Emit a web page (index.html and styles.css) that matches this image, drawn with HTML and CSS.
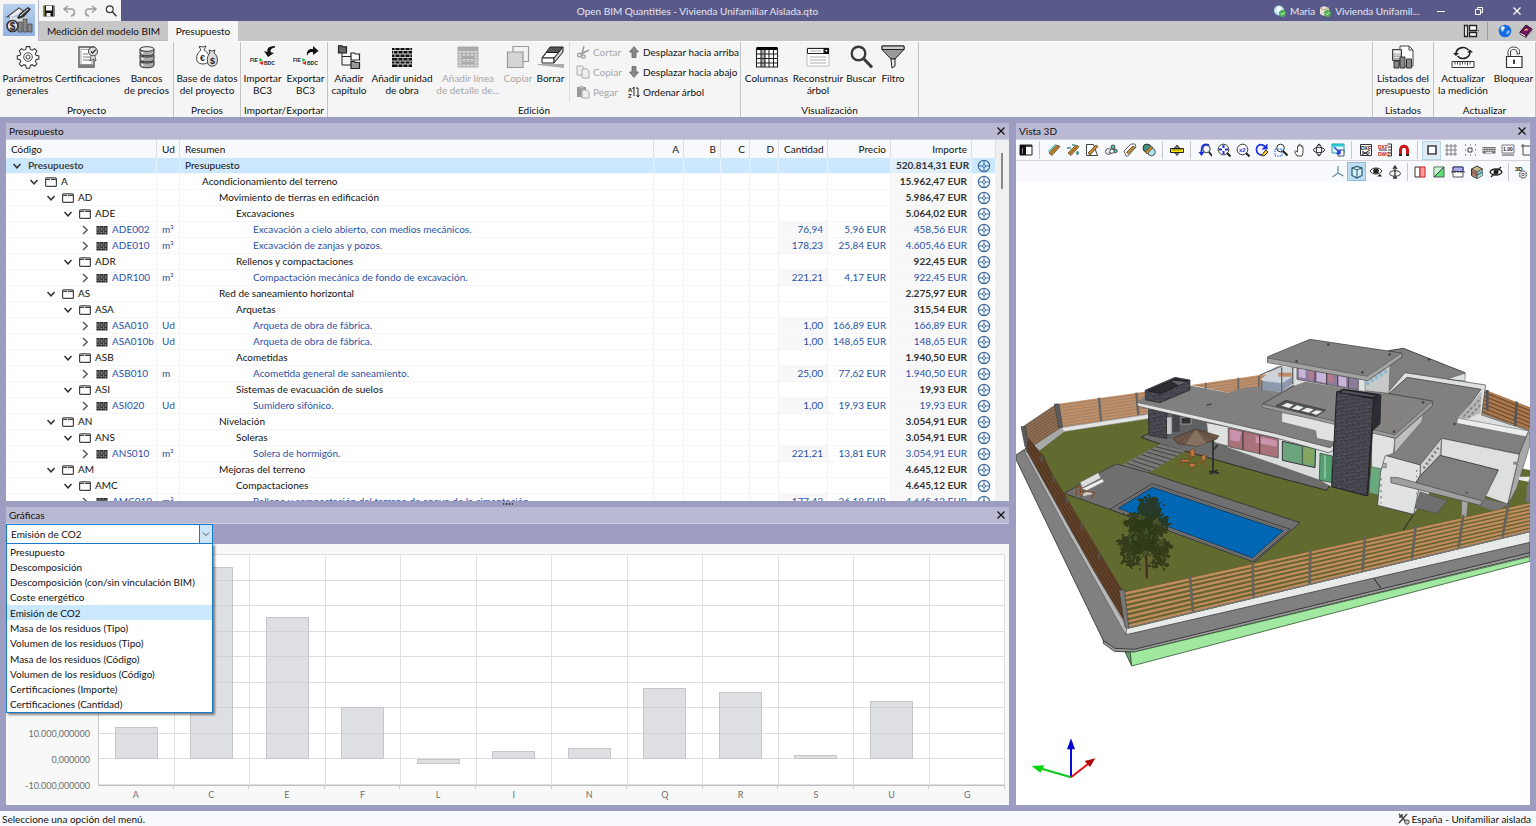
FILE: index.html
```html
<!DOCTYPE html>
<html lang="es">
<head>
<meta charset="utf-8">
<title>Open BIM Quantities - Vivienda Unifamiliar Aislada.qto</title>
<link rel="stylesheet" href="styles.css">
</head>
<body>
<svg class="defs" aria-hidden="true">
  <symbol id="i-open" viewBox="0 0 10 10"><path d="M1.500 3 5 6.800 8.500 3" fill="none" stroke="#333" stroke-width="1.500"/></symbol>
  <symbol id="i-closed" viewBox="0 0 10 10"><path d="M3 1 7.200 5 3 9" fill="none" stroke="#555" stroke-width="1.400"/></symbol>
  <symbol id="i-folder" viewBox="0 0 12 10"><rect x=".6" y=".8" width="10.800" height="8.600" rx="1" fill="#fff" stroke="#444" stroke-width="1.200"/><path d="M1 2.500h4M6 2.500h5" stroke="#444" stroke-width="1.200"/></symbol>
  <symbol id="i-wall" viewBox="0 0 12 10"><rect x=".5" y="1" width="11" height="8.500" fill="#2b2b2b"/><path d="M.5 3.100h11M.5 5.200h11M.5 7.300h11M3.500 1v2M7.500 1v2M5.500 3v2M9.500 3v2M1.800 3v2M3.500 5.500v2M7.500 5.500v2M5.500 7.500v2M9.500 7.500v2" stroke="#aaa" stroke-width=".5"/></symbol>
  <symbol id="i-target" viewBox="0 0 14 14"><g fill="none" stroke="#3c6f9f"><circle cx="7" cy="7" r="5.700" stroke-width="1.200"/><circle cx="7" cy="7" r="1.500"/><path d="M7 1v4M7 9v4M1 7h4M9 7h4"/></g></symbol>
  <symbol id="i-x" viewBox="0 0 10 10"><path d="M1.500 1.500l7 7M8.500 1.500l-7 7" stroke="currentColor" stroke-width="1.300"/></symbol>
  <symbol id="i-lens" viewBox="0 0 24 24"><circle cx="9.500" cy="8.500" r="6.800" fill="none" stroke="#3a3a3a" stroke-width="2.400"/><path d="M14.500 13.500 23 22.500" stroke="#3a3a3a" stroke-width="3"/></symbol>
</svg>

<header class="top">
  <button class="app" aria-label="Menú de la aplicación">
    <svg viewBox="0 0 32 32" width="32" height="32"><path d="M7 13H4L16 4l6 4M9 13v5M23 13v5" fill="#eee" stroke="#555" stroke-width="1.200"/><path d="M7 13h17v11H7z" fill="#d8dde4"/><path d="M14 14l3-5 8-6 3 2-7 8-5 2z" fill="#333"/><path d="M17 12l8-7" stroke="#fff" stroke-width="1"/><path d="M15 18h4v10h-4zM20 15h4v13h-4zM25 20h4v8h-4z" fill="#888" stroke="#444" stroke-width=".8"/><circle cx="9.500" cy="22" r="5.500" fill="#ddd" stroke="#333" stroke-width="1.600"/><text x="9.500" y="25.500" class="t-ic t-10" text-anchor="middle">$</text></svg>
  </button>
  <div class="bars">
    <div class="title">
      <div class="quick">
        <button aria-label="Guardar"><svg viewBox="0 0 12 12" width="12" height="12"><path d="M.5.5h11v11H.5z" fill="#111"/><path d="M3 1h6v4.500H3zM3.500 8h4v3.500h-4z" fill="#f5f5f5"/><path d="M1.500 1v10M10.500 1v10" stroke="#7b7a2a"/></svg></button>
        <button aria-label="Deshacer"><svg viewBox="0 0 13 12" width="13" height="12"><path d="M5 1 1 4l4 3.500M1.500 4H8c5 0 4.500 6 0 7" fill="none" stroke="#999" stroke-width="1.500"/></svg></button>
        <button aria-label="Rehacer"><svg viewBox="0 0 13 12" width="13" height="12"><path d="M8 1l4 3-4 3.500M11.500 4H5c-5 0-4.500 6 0 7" fill="none" stroke="#999" stroke-width="1.500"/></svg></button>
        <button aria-label="Buscar"><svg width="12" height="12"><use href="#i-lens"/></svg></button>
      </div>
      <h1>Open BIM Quantities - Vivienda Unifamiliar Aislada.qto</h1>
      <div class="account">
        <svg viewBox="0 0 12 12" width="12" height="12"><circle cx="5" cy="5.500" r="5" fill="#bfe4ee"/><path d="M4 2c2-1 4 0 3 3l-3 3-2-3z" fill="#fff"/><circle cx="8.500" cy="8.500" r="3.400" fill="#4caf50"/><path d="M7 8.500l1.200 1.200 2-2.200" fill="none" stroke="#fff"/></svg><span>Maria</span>
        <svg viewBox="0 0 12 12" width="12" height="12"><path d="M1 3l4-2 5 2v6l-5 2-4-2z" fill="#e8ddd0"/><path d="M1 3l4 2 5-2" fill="none" stroke="#b9a68c"/><circle cx="8.500" cy="8.500" r="3.400" fill="#4caf50"/><path d="M7 8.500l1.200 1.200 2-2.200" fill="none" stroke="#fff"/></svg><span>Vivienda Unifamil...</span>
      </div>
      <div class="win">
        <button aria-label="Minimizar"><svg viewBox="0 0 10 10" width="10" height="10"><path d="M1 5.500h8" stroke="#fff"/></svg></button>
        <button aria-label="Restaurar"><svg viewBox="0 0 10 10" width="10" height="10"><path d="M1.500 3.500h5v5h-5zM3.500 3V1.500h5v5H7" fill="none" stroke="#fff"/></svg></button>
        <button aria-label="Cerrar"><svg width="10" height="10"><use href="#i-x"/></svg></button>
      </div>
    </div>
    <nav class="tabs">
      <button class="tab">Medición del modelo BIM</button>
      <button class="tab on">Presupuesto</button>
      <span class="grow"></span>
      <button aria-label="Disposición" class="mini"><svg viewBox="0 0 16 14" width="16" height="14"><path d="M1.500 1.500h3v11h-3zM6.500 1.500h7v5h-7zM6.500 8.500h7v4h-7z" fill="#fff" stroke="#222" stroke-width="1.300"/><path d="M15 6.500h1" stroke="#222"/></svg></button>
      <span class="vsep"></span>
      <button aria-label="Web" class="mini"><svg viewBox="0 0 14 14" width="14" height="14"><circle cx="7" cy="7" r="6.300" fill="#1769e0"/><path d="M2.500 5c1-3 4-3 4.500-1.500L6 6 5 8 3 7zM8 8l3-2 1 2-3 3z" fill="#7db8f5"/><circle cx="4.800" cy="4" r="1.700" fill="#fff"/></svg></button>
      <button aria-label="Ayuda" class="mini"><svg viewBox="0 0 14 14" width="14" height="14"><path d="M1 8 7 1l6 4-6 7z" fill="#73125f" stroke="#300428"/><path d="M1 8v2l6 3.500v-2zM7 13l6-7V5" fill="#fff" stroke="#300428" stroke-width=".8"/><path d="M6 7c0-2 3-2 2-.5" fill="none" stroke="#ffd23c" stroke-width="1.200"/></svg></button>
    </nav>
  </div>
</header>

<div class="ribbon">
  <section class="group">
    <div class="tools">
      <button class="tool w55"><svg viewBox="0 0 24 24" width="24" height="24"><path d="M10.200 1.500h3.600l.6 3 2 .9 2.600-1.700 2.400 2.500-1.700 2.600.8 2 3 .6v3.400l-3 .6-.8 2 1.700 2.500-2.400 2.500-2.600-1.700-2 .8-.6 3h-3.600l-.6-3-2-.8L5 22.400l-2.400-2.500 1.700-2.500-.8-2-3-.6v-3.400l3-.6.8-2-1.700-2.600L5 3.700l2.600 1.700 2-.9z" fill="#fff" stroke="#333" stroke-width="1.100" transform="translate(.8 .2) scale(.94)"/><circle cx="12" cy="12" r="4.300" fill="none" stroke="#444"/><circle cx="12" cy="12" r="2" fill="none" stroke="#444"/></svg>Parámetros<br>generales</button>
      <button class="tool w65"><svg viewBox="0 0 24 24" width="24" height="24"><path d="M3 2h15v20H3z" fill="#eee" stroke="#555" stroke-width="1.400"/><path d="M5 4.500h11v15H5z" fill="#fff" stroke="#999" stroke-width=".8"/><path d="M7 9h5M7 12h7M7 15h7M3 20h15v2H3z" stroke="#777" fill="#888"/><circle cx="17" cy="6.500" r="4.500" fill="#ddd" stroke="#333"/><path d="M15 6.500l1.600 1.700 3-3.500" fill="none" stroke="#222" stroke-width="1.200"/><path d="M15 11l-1 5 3-2 3 2-1-5" fill="#ddd" stroke="#444" stroke-width=".8"/></svg>Certificaciones</button>
      <button class="tool w53"><svg viewBox="0 0 24 24" width="24" height="24"><g fill="#aaa" stroke="#333"><path d="M5 16v4.500c0 3 14 3 14 0V16"/><ellipse cx="12" cy="16" rx="7" ry="2"/><path d="M5 10v4.500c0 3 14 3 14 0V10"/><ellipse cx="12" cy="10" rx="7" ry="2"/><path d="M5 4v4.500c0 3 14 3 14 0V4"/><ellipse cx="12" cy="4" rx="7" ry="2.300" fill="#eee"/></g><path d="M7.500 7v2M7.500 13v2M7.500 19v2" stroke="#fff" stroke-width="1.500"/></svg>Bancos<br>de precios</button>
    </div>
    <h2>Proyecto</h2>
  </section>
  <section class="group">
    <div class="tools">
      <button class="tool w67"><svg viewBox="0 0 24 24" width="24" height="24"><path d="M6 5 4 1.500 8 2l3-1-2 4c4 2 6 6 5 11-2 4-10 4-12 0-1-4 0-8 4-11z" fill="#fff" stroke="#444"/><path d="M15 8l-1-3 3 1 3-1-1 3c3 2 4 6 3 10-1 4-8 4-9 1-1-4-1-8 2-11z" fill="#ddd" stroke="#444"/><text x="7.500" y="15.500" class="t-ic t-9" text-anchor="middle">€</text><text x="17.500" y="19" class="t-ic t-9" text-anchor="middle">$</text></svg>Base de datos<br>del proyecto</button>
    </div>
    <h2>Precios</h2>
  </section>
  <section class="group">
    <div class="tools">
      <button class="tool w43"><svg viewBox="0 0 26 24" width="26" height="24"><path d="M25 1C17 1 17 5 17.500 7L14 6l4 6 6-4-3-.800C20 5 21 3 25 2.500z" fill="#111"/><text x="0" y="17" class="t-ic t-5">FIE</text><text x="14" y="20" class="t-ic t-5">BDC</text><path d="M9.500 13l3 2-3 2z" fill="#0b3"/><path d="M13 16v4l-4-2z" fill="#e22"/></svg>Importar<br>BC3</button>
      <button class="tool w43"><svg viewBox="0 0 26 24" width="26" height="24"><path d="M14 11C13 5 17 3.500 20 4V1l5.500 5L20 10V7c-3-.5-5 1-6 4z" fill="#111"/><text x="0" y="17" class="t-ic t-5">FIE</text><text x="14" y="20" class="t-ic t-5">BDC</text><path d="M9.500 13l3 2-3 2z" fill="#0b3"/><path d="M13 16v4l-4-2z" fill="#e22"/></svg>Exportar<br>BC3</button>
    </div>
    <h2>Importar/Exportar</h2>
  </section>
  <section class="group">
    <div class="tools">
      <button class="tool w42"><svg viewBox="0 0 24 24" width="24" height="24"><path d="M5 8v12h9M5 11.500h9" fill="none" stroke="#222"/><g stroke="#222" stroke-width="1.200"><path d="M1.500.800h3.500l1 1h3.500v6h-8z" fill="#666"/><path d="M14 8h3.500l1 1H22.500v6H14z" fill="#fff"/><path d="M14 16.500h3.500l1 1H22.500v6H14z" fill="#999"/></g></svg>Añadir<br>capítulo</button>
      <button class="tool w64"><svg viewBox="0 0 24 24" width="24" height="24"><path d="M2 3h20v19H2z" fill="#111"/><path d="M2 5.500h20M2 9h20M2 12.500h20M2 16h20M2 19h20M5 3v2.500M10 3v2.500M15 3v2.500M20 3v2.500M3.500 6v3M8 6v3M13 6v3M18 6v3M5 9v3M10 9v3M15 9v3M20 9v3M8 12.500v3M13 12.500v3M18 12.500v3M5 16v3M10 16v3M15 16v3M20 16v3M8 19v3M13 19v3M18 19v3" stroke="#eee" stroke-width=".8"/></svg>Añadir unidad<br>de obra</button>
      <button class="tool w68" disabled><svg viewBox="0 0 24 24" width="24" height="24"><path d="M2 2h20v4H2z" fill="#aaa"/><path d="M2 6h20v16H2z" fill="#d8d8d8"/><path d="M2 8.500h20M2 11h20M2 13.500h20M2 16h20M2 19h20M6 6v16M10 6v16M14 6v16M18 6v16M2 2h20v20H2z" fill="none" stroke="#a6a6a6" stroke-width=".9"/><path d="M6 11h12v2H6zM6 17h12v2H6z" fill="#aaa"/></svg>Añadir línea<br>de detalle de...</button>
      <button class="tool w32" disabled><svg viewBox="0 0 24 24" width="24" height="24"><path d="M7 1.500h15.500v15H7z" fill="#f3f3f3" stroke="#999" stroke-width="1.200"/><path d="M1.500 7H17v15.500H1.500z" fill="#d5d5d5" stroke="#999" stroke-width="1.200"/></svg>Copiar</button>
      <button class="tool w33"><svg viewBox="0 0 26 24" width="26" height="24"><path d="M0 19h26v4L0 20z" fill="#aaa"/><path d="M12 2h13L16 13H4z" fill="#555" stroke="#222"/><path d="M8.500 7.500H21L16 13H4z" fill="#fff" stroke="#222"/><path d="M4 13h12v5H4z" fill="#fff" stroke="#222"/><path d="M16 13l9-11v5l-9 11z" fill="#ccc" stroke="#222"/></svg>Borrar</button>
      <span class="vsep tall"></span>
      <div class="stack s1">
        <button disabled><svg viewBox="0 0 14 14" width="14" height="14"><path d="M8 1 6 9M13 5 5 9" stroke="#999" stroke-width="1.400"/><circle cx="3.500" cy="10" r="1.900" fill="none" stroke="#999" stroke-width="1.200"/><circle cx="7.500" cy="11.500" r="1.700" fill="none" stroke="#999" stroke-width="1.200"/></svg>Cortar</button>
        <button disabled><svg viewBox="0 0 14 14" width="14" height="14"><path d="M1 1h5l2 2v7H1z" fill="#eee" stroke="#aaa"/><path d="M6 4h5l2 2v7H6z" fill="#eee" stroke="#aaa"/></svg>Copiar</button>
        <button disabled><svg viewBox="0 0 14 14" width="14" height="14"><path d="M1 2h9v10H1z" fill="#999"/><path d="M3.500.800h4v2.500h-4z" fill="#bbb"/><path d="M6 5h5l2 2v6H6z" fill="#eee" stroke="#aaa"/></svg>Pegar</button>
      </div>
      <div class="stack s2">
        <button><svg viewBox="0 0 12 12" width="12" height="12"><path d="M6 .5 10.500 6H8v5.500H4V6H1.500z" fill="#888" stroke="#666" stroke-width=".8"/></svg>Desplazar hacia arriba</button>
        <button><svg viewBox="0 0 12 12" width="12" height="12"><path d="M6 11.500 10.500 6H8V.5H4V6H1.500z" fill="#888" stroke="#666" stroke-width=".8"/></svg>Desplazar hacia abajo</button>
        <button><svg viewBox="0 0 12 12" width="12" height="12"><path d="M6 1v9M6 1 4.500 3M10 2v9M10 11l-1.500-2M10 11l1.500-2M8 2h2" stroke="#222" fill="none"/><text x="0" y="6" class="t-ic t-6">A</text><text x="0" y="12" class="t-ic t-6">Z</text></svg>Ordenar árbol</button>
      </div>
    </div>
    <h2>Edición</h2>
  </section>
  <section class="group vis">
    <div class="tools">
      <button class="tool w51"><svg viewBox="0 0 24 24" width="24" height="24"><path d="M1.500 2h21v20h-21z" fill="#fff"/><path d="M6 5h4v17H6z" fill="#aaa"/><path d="M1.500 2h21v3h-21z" fill="#000"/><path d="M1.500 9h21M1.500 13.500h21M1.500 18h21M6 5v17M10 5v17M14 5v17M18.500 5v17M1.500 3v19h21V3" fill="none" stroke="#222" stroke-width="1.100"/></svg>Columnas</button>
      <button class="tool w52"><svg viewBox="0 0 24 24" width="24" height="24"><path d="M1 3h22v18H1z" fill="#fff" stroke="#bbb"/><path d="M1.500 3.500h21v5h-21z" fill="#fff" stroke="#222"/><path d="M17.500 3h5.500v6h-5.500z" fill="#111"/><path d="M19 5l1.300 2 1.300-2z" fill="#fff"/><path d="M4 6h11M4 12h16M4 15h16M4 18h16" stroke="#aaa"/></svg>Reconstruir<br>árbol</button>
      <button class="tool w34"><svg width="24" height="24"><use href="#i-lens"/></svg>Buscar</button>
      <button class="tool w30"><svg viewBox="0 0 24 24" width="24" height="24"><path d="M1 1h22v3.500L14 14H10L1 4.500z" fill="#999" stroke="#222"/><path d="M1 1h22v3.500H1z" fill="#ccc" stroke="#222"/><path d="M10 14h4v7l-3 2z" fill="#eee" stroke="#222"/></svg>Filtro</button>
    </div>
    <h2>Visualización</h2>
  </section>
  <span class="grow"></span>
  <section class="group first">
    <div class="tools">
      <button class="tool w61"><svg viewBox="0 0 24 24" width="24" height="24"><path d="M9 1h9l4 4v16H9z" fill="#fff" stroke="#444"/><path d="M18 1v4h4" fill="none" stroke="#444"/><path d="M1.500 4.500h9v11h-9z" fill="#aaa" stroke="#444"/><path d="M3 6h6v2H3zM3 10h6M3 12.500h6" fill="#fff" stroke="#eee"/><g fill="#888" stroke="#333"><path d="M3 16h5v7H3zM9 12h5v11H9zM15.500 14h5v9h-5z"/></g></svg>Listados del<br>presupuesto</button>
    </div>
    <h2>Listados</h2>
  </section>
  <section class="group">
    <div class="tools">
      <button class="tool w58"><svg viewBox="0 0 24 24" width="24" height="24"><path d="M5 9a7 6.500 0 0 1 12.500-4M19 7a7 6.500 0 0 1-12.500 4" fill="none" stroke="#222" stroke-width="1.600"/><path d="M2 8h6L5 11zM16 7.500h6L19 4.500z" fill="#222"/><path d="M1 16.500h22v6H1z" fill="#fff" stroke="#333"/><path d="M4 17v2.500M6.500 17v2.500M9 17v3.500M11.500 17v2.500M14 17v2.500M16.500 17v3.500M19 17v2.500" stroke="#333" stroke-width=".9"/></svg>Actualizar<br>la medición</button>
      <button class="tool w43"><svg viewBox="0 0 24 24" width="24" height="24"><path d="M6 11V6.500C6 .5 17.500.5 17.500 6.500V9h-2.500V7c0-3.500-6.500-3.500-6.500 0v4" fill="#fff" stroke="#444"/><path d="M4.500 11.500h15.500v11H4.500z" fill="#fff" stroke="#333" stroke-width="1.200"/><path d="M12 15v4M11 15.500h2" stroke="#222" stroke-width="1.600"/></svg>Bloquear</button>
    </div>
    <h2>Actualizar</h2>
  </section>
</div>

<main class="work">
  <div class="left">
    <section class="panel budget">
      <header class="cap"><h2>Presupuesto</h2><button aria-label="Cerrar panel"><svg width="10" height="10"><use href="#i-x"/></svg></button></header>
      <div class="scroll">
        <table class="tree">
          <colgroup><col class="c-code"><col class="c-ud"><col><col class="c-a"><col class="c-b"><col class="c-c"><col class="c-c"><col class="c-qty"><col class="c-price"><col class="c-total"><col class="c-icon"></colgroup>
          <thead><tr><th>Código</th><th>Ud</th><th>Resumen</th><th class="n">A</th><th class="n">B</th><th class="n">C</th><th class="n">D</th><th class="n">Cantidad</th><th class="n">Precio</th><th class="n">Importe</th><th></th></tr></thead>
          <tbody id="rows"></tbody>
        </table>
        <div class="bar"><span></span></div>
      </div>
    </section>
    <div class="grip"><svg viewBox="0 0 12 4" width="12" height="4"><path d="M1 2h10" stroke="#444" stroke-width="2" stroke-dasharray="1.500 1.500"/></svg></div>
    <section class="panel charts">
      <header class="cap"><h2>Gráficas</h2><button aria-label="Cerrar panel"><svg width="10" height="10"><use href="#i-x"/></svg></button></header>
      <div class="picker">
        <div class="combo">
          <select aria-label="Gráfica"><option>Emisión de CO2</option></select>
          <span class="drop"><svg viewBox="0 0 10 10" width="10" height="10"><path d="M2 3.500 5 6.500 8 3.500" fill="none" stroke="#555"/></svg></span>
          <ul role="listbox" aria-label="Opciones de gráfica">
            <li role="option">Presupuesto</li><li role="option">Descomposición</li><li role="option">Descomposición (con/sin vinculación BIM)</li><li role="option">Coste energético</li><li role="option" aria-selected="true">Emisión de CO2</li><li role="option">Masa de los residuos (Tipo)</li><li role="option">Volumen de los residuos (Tipo)</li><li role="option">Masa de los residuos (Código)</li><li role="option">Volumen de los residuos (Código)</li><li role="option">Certificaciones (Importe)</li><li role="option">Certificaciones (Cantidad)</li>
          </ul>
        </div>
      </div>
      <div class="chart">
        <div class="yaxis"><span>10.000,000000</span><span>0,000000</span><span>-10.000,000000</span></div>
        <div class="plot" id="plot"></div>
        <div class="xaxis" id="xaxis"></div>
      </div>
    </section>
  </div>

  <section class="panel view">
    <header class="cap"><h2>Vista 3D</h2><button aria-label="Cerrar panel"><svg width="10" height="10"><use href="#i-x"/></svg></button></header>
    <div class="icons r1">
      <button aria-label="Panel"><svg viewBox="0 0 14 14"><path d="M1 2h12v10H1z" fill="#fff" stroke="#222"/><path d="M1 2h6v10H1z" fill="#111"/><path d="M1 3h12" stroke="#111" stroke-width="1.500"/><path d="M3 6h1M3 8h1M3 10h1" stroke="#fff"/></svg></button>
      <i></i>
      <button aria-label="Viga"><svg viewBox="0 0 14 14"><path d="M2 10 10 2l3 1.500-8 9z" fill="#c98a2b" stroke="#5a4a3a" stroke-width=".8"/><path d="M1.500 8.500 9 1.500" stroke="#5fb3a8" stroke-width="1.500"/><path d="M3.500 11 11.500 3" stroke="#8a5a1a"/></svg></button>
      <button aria-label="Añadir viga"><svg viewBox="0 0 14 14"><path d="M2 10 10 2l3 1.500-8 9z" fill="#c98a2b" stroke="#5a4a3a" stroke-width=".8"/><path d="M3.500 11 11.500 3" stroke="#8a5a1a"/><path d="M1 5h4M6 2h3M10 10h3M11.500 8v4" stroke="#3f8f86" stroke-width="1.700"/></svg></button>
      <button aria-label="Editar"><svg viewBox="0 0 14 14"><path d="M1.500 1.500h7l4 11h-11z" fill="#fff" stroke="#444"/><path d="M3 10 11 2l2 1.500L5 12z" fill="#c98a2b" stroke="#543" stroke-width=".8"/></svg></button>
      <button aria-label="Unir"><svg viewBox="0 0 14 14"><circle cx="4.500" cy="8.500" r="3" fill="#eee" stroke="#555"/><path d="M5 10h5l2-3-5-1z" fill="#fff" stroke="#555"/><circle cx="9" cy="4" r="2" fill="#5bc4b6" stroke="#444"/><circle cx="11.500" cy="8" r="1.700" fill="#5bc4b6" stroke="#444"/></svg></button>
      <button aria-label="Capas"><svg viewBox="0 0 14 14"><path d="M1 8 8 1h4l1 3-8 9H3z" fill="#fff" stroke="#666"/><path d="M3.500 9.500 10 3l2 1.500L5.500 11z" fill="#c98a2b" stroke="#543" stroke-width=".8"/></svg></button>
      <button aria-label="Ver elementos"><svg viewBox="0 0 14 14"><circle cx="5" cy="5" r="4" fill="#3f8f86" stroke="#333"/><circle cx="9.500" cy="9" r="3.800" fill="#a8e6ea" stroke="#555"/><path d="M3 9 9 3l2 1.500L5 11z" fill="#c98a2b" stroke="#543" stroke-width=".8"/></svg></button>
      <i></i>
      <button aria-label="Medir"><svg viewBox="0 0 14 14"><path d="M4 5.500 7 2l3 3.500M5 10l2 2.500L9 10" fill="#777" stroke="#444"/><path d="M.5 5.500h13v4H.5z" fill="#ffe800" stroke="#222"/><path d="M3 6v1.500M5 6v1.500M7 6v1.500M9 6v1.500M11 6v1.500" stroke="#222" stroke-width=".8"/></svg></button>
      <i></i>
      <button aria-label="Vista previa"><svg viewBox="0 0 14 14"><circle cx="8.500" cy="6" r="3.700" fill="#fff" stroke="#333"/><path d="M11 9l3 4" stroke="#222" stroke-width="1.800"/><path d="M11 2C5 0 3 3 3.500 10" fill="none" stroke="#1a2fe0" stroke-width="1.900"/><path d="M.5 9h6L3.500 13z" fill="#1a2fe0"/></svg></button>
      <button aria-label="Encuadrar"><svg viewBox="0 0 14 14"><circle cx="6.500" cy="6.500" r="5.300" fill="#fff" stroke="#333"/><path d="M10 10l3.500 3.500" stroke="#222" stroke-width="2"/><path d="M6.500 2v3M6.500 8v3M2 6.500h3M8 6.500h3" stroke="#1a2fe0" stroke-width="2"/></svg></button>
      <button aria-label="Escala"><svg viewBox="0 0 14 14"><circle cx="6.500" cy="6.500" r="5.300" fill="#fff" stroke="#333"/><path d="M10 10l3.500 3.500" stroke="#222" stroke-width="2"/><text x="3" y="9" class="t-ic t-6 blue">x2</text></svg></button>
      <button aria-label="Redibujar"><svg viewBox="0 0 14 14"><path d="M10 3.500C5-.5 1 3 1.500 7c.5 4 3 5 6 5" fill="none" stroke="#1a2fe0" stroke-width="1.700"/><path d="M12.500.500v6h-6z" fill="#1a2fe0"/><path d="M6 12.500 11 7l2 2-4 4z" fill="#f5c518" stroke="#532"/></svg></button>
      <button aria-label="Zoom ventana"><svg viewBox="0 0 14 14"><circle cx="6.500" cy="5" r="3.800" fill="#fff" stroke="#333"/><path d="M9 8l4.500 4.500" stroke="#222" stroke-width="2"/><path d="M1 6h7v7H1z" fill="none" stroke="#1a5fe0" stroke-dasharray="1.500 1"/></svg></button>
      <button aria-label="Desplazar"><svg viewBox="0 0 14 14"><path d="M4 13 1.500 8.500l1-.8L4.500 9V3.500c0-1 1.300-1 1.300 0V2c0-1 1.400-1 1.400 0v.8c0-1 1.400-1 1.400 0V4c0-1 1.400-1 1.400 0v5.500L9 13z" fill="#fff" stroke="#333" stroke-width=".9"/></svg></button>
      <button aria-label="Orbitar"><svg viewBox="0 0 14 14"><ellipse cx="7" cy="7" rx="5.500" ry="2.700" fill="none" stroke="#333"/><ellipse cx="7" cy="7" rx="2.700" ry="5.500" fill="none" stroke="#333"/><path d="M5 2.500 7 .5l2 2zM5 11.500l2 2 2-2z" fill="#333"/></svg></button>
      <button aria-label="Ventanas"><svg viewBox="0 0 14 14"><path d="M1 1h12v9H1z" fill="#e7ffff" stroke="#2a9aa8"/><path d="M1 1h12v2.500H1z" fill="#26c4d0"/><path d="M7 7h6v6H7z" fill="#fff" stroke="#357"/><path d="M3 4l6 6M9 7v3.500H5.500" fill="none" stroke="#1a2fe0" stroke-width="1.300"/></svg></button>
      <i></i>
      <button aria-label="Plantilla DXF"><svg viewBox="0 0 14 14"><path d="M1.500 1.500h11v11h-11z" fill="#fff" stroke="#333"/><text x="2" y="7" class="t-ic t-5">DXF</text><path d="M3 12l8-5M3 8l8 5M3 10h8" stroke="#333" fill="none"/></svg></button>
      <button aria-label="Capas DXF"><svg viewBox="0 0 14 14"><path d="M9.500 1h4v12h-4M10 4h4M10 7h4M10 10h4M1 7h8" fill="none" stroke="#333"/><text x="0" y="5.500" class="t-ic t-5 red">DXF</text><text x="0" y="13" class="t-ic t-5 red">DWG</text></svg></button>
      <button aria-label="Captura"><svg viewBox="0 0 14 14"><path d="M3.500 13V7c0-5 7-5 7 0v6" fill="none" stroke="#d01818" stroke-width="3"/><path d="M2 12h3M9 12h3" stroke="#222" stroke-width="2"/></svg></button>
      <i></i>
      <button aria-label="Marco" class="sel"><svg viewBox="0 0 14 14"><path d="M3 3h8v8H3z" fill="#fff" stroke="#444" stroke-width="1.700"/></svg></button>
      <button aria-label="Rejilla"><svg viewBox="0 0 14 14"><path d="M3 1v12M7 1v12M11 1v12M1 3h12M1 7h12M1 11h12" stroke="#777" stroke-width=".9"/></svg></button>
      <button aria-label="Puntos"><svg viewBox="0 0 14 14"><path d="M5 5h4v4H5z" fill="none" stroke="#444"/><path d="M2 2h1M7 2h1M12 2h1M2 7h1M12 7h1M2 12h1M7 12h1M12 12h1" stroke="#444"/></svg></button>
      <button aria-label="Teclado"><svg viewBox="0 0 14 14"><path d="M.5 4h13v6.500H.5z" fill="#777"/><path d="M1 5.500h12M1 7.500h12" stroke="#eee" stroke-dasharray="1 .7"/><path d="M4 9.300h6" stroke="#fff"/></svg></button>
      <button aria-label="Cotas"><svg viewBox="0 0 14 14"><path d="M1 2h12v8H1z" fill="#fff" stroke="#777"/><text x="2" y="8" class="t-ic t-5">1.00</text><path d="M1 12h12" stroke="#444"/></svg></button>
      <button aria-label="Ejes"><svg viewBox="0 0 14 14"><path d="M3 1v11h11M1 3h12" stroke="#444" fill="none"/></svg></button>
    </div>
    <div class="icons r2">
      <button aria-label="Ejes 3D"><svg viewBox="0 0 14 14"><path d="M7 1v7l-5.500 4M7 8l5.500 3" fill="none" stroke="#5b8ba0" stroke-width="1.200"/></svg></button>
      <button aria-label="Perspectiva" class="sel on"><svg viewBox="0 0 14 14"><path d="M2 3l5-1.500L12 3v7.500L7 13l-5-2.500z" fill="#d6eef8" stroke="#2d5a70" stroke-width="1.200"/><path d="M2 3l5 1.800L12 3M7 5v8" fill="none" stroke="#2d5a70"/></svg></button>
      <button aria-label="Órbita"><svg viewBox="0 0 14 14"><path d="M1 6c2-4 10-4 12 0-2 4-10 4-12 0z" fill="#fff" stroke="#333"/><circle cx="7" cy="6" r="2.800" fill="#222"/><path d="M8 11.500h5L11 9z" fill="#222"/></svg></button>
      <button aria-label="Giro"><svg viewBox="0 0 14 14"><ellipse cx="7" cy="8.500" rx="5.500" ry="2.800" fill="none" stroke="#333"/><path d="M7 1v12M5 4l2-3 2 3M5 13h4" fill="none" stroke="#333" stroke-width="1.300"/></svg></button>
      <i></i>
      <button aria-label="Sección vertical"><svg viewBox="0 0 14 14"><path d="M2 2h5v10H2z" fill="#fff" stroke="#333"/><path d="M7 2h5v10H7z" fill="#ff9b9b" stroke="#c22"/></svg></button>
      <button aria-label="Sección diagonal"><svg viewBox="0 0 14 14"><path d="M2 2h10v10H2z" fill="#5ee07e" stroke="#555"/><path d="M2.500 2.500h9l-9 9z" fill="#cff5d8"/><path d="M12 2 2 12" stroke="#333"/></svg></button>
      <button aria-label="Sección horizontal"><svg viewBox="0 0 14 14"><path d="M2 2h10v10H2z" fill="#fff" stroke="#555"/><path d="M2 2h10v4.500H2z" fill="#a9a9ee" stroke="#336"/><path d="M0 7h14" stroke="#333" stroke-dasharray="2 1"/></svg></button>
      <button aria-label="Materiales"><svg viewBox="0 0 14 14"><path d="M1.500 4 7 1l5.500 3v6.500L7 13.500l-5.500-3z" fill="#c9b98c" stroke="#333"/><path d="M7 7l5.500-3v6.500L7 13.500z" fill="#9fd6d8"/><path d="M1.500 4 7 7l5.500-3M7 7v6.500M1.500 7 7 10l5.500-3" fill="none" stroke="#444"/><path d="M2 6l4 2M2 9l4 2" stroke="#b44"/></svg></button>
      <button aria-label="Ocultar"><svg viewBox="0 0 14 14"><path d="M1 7c2-4 10-4 12 0-2 4-10 4-12 0z" fill="#fff" stroke="#222" stroke-width="1.300"/><circle cx="7" cy="7" r="2.500" fill="#222"/><path d="M12 2 2 12" stroke="#222" stroke-width="1.300"/></svg></button>
      <i></i>
      <button aria-label="Opciones 3D"><svg viewBox="0 0 14 14"><circle cx="9" cy="9.500" r="3.500" fill="#eee" stroke="#777" stroke-dasharray="2 .7" stroke-width="1.500"/><circle cx="9" cy="9.500" r="1.200" fill="none" stroke="#666"/><text x="1" y="6" class="t-ic t-6">3D</text></svg></button>
    </div>
    <svg class="scene" viewBox="3 -444 1542 1869" preserveAspectRatio="xMidYMid slice" role="img" aria-label="Modelo 3D de la vivienda">
      <defs>
        <pattern id="slatA" width="40" height="9" patternUnits="userSpaceOnUse" patternTransform="skewY(-8)"><path d="M0 0h40v9H0z" fill="#c98e60"/><path d="M0 2h40" stroke="#85807a" stroke-width="2.500"/></pattern>
        <pattern id="slatB" width="40" height="9" patternUnits="userSpaceOnUse" patternTransform="skewY(-33)"><path d="M0 0h40v9H0z" fill="#a0714c"/><path d="M0 2h40" stroke="#5f5850" stroke-width="3.500"/></pattern>
        <pattern id="slatC" width="40" height="12" patternUnits="userSpaceOnUse" patternTransform="skewY(22)"><path d="M0 0h40v12H0z" fill="#b47a4c"/><path d="M0 2h40" stroke="#5f4a36" stroke-width="4"/></pattern>
        <pattern id="slatD" width="9" height="9" patternUnits="userSpaceOnUse" patternTransform="rotate(58)"><path d="M0 0h9v9H0z" fill="#654329"/><path d="M0 2h9" stroke="#47301f" stroke-width="3"/></pattern>
        <pattern id="stone" width="34" height="22" patternUnits="userSpaceOnUse" patternTransform="skewY(11)"><path d="M0 0h34v22H0z" fill="#43434c"/><path d="M2 3h12M20 6h11M8 11h14M26 14h8M0 16h9M14 19h12" stroke="#565662" stroke-width="3"/><path d="M4 7h12M22 10h8M6 14h10M18 2h10M28 19h6" stroke="#34343d" stroke-width="3"/></pattern>
        <filter id="leaf" x="-20%" y="-20%" width="140%" height="140%"><feTurbulence type="fractalNoise" baseFrequency=".07" numOctaves="4" seed="4" result="n"/><feDisplacementMap in="SourceGraphic" in2="n" scale="52" xChannelSelector="R" yChannelSelector="G"/></filter>
      </defs>
      <g stroke-linejoin="round">
        <path d="M3 375 40 350 330 905 1545 630V670L358 960 300 957 265 932 3 388z" fill="#808080" stroke="#333" stroke-width="2.500"/>
        <path d="M265 932 300 955 358 958 1545 668V677L358 966 298 964 265 940z" fill="#9a9a9a" stroke="#2b2b2b" stroke-width="2.500"/>
        <path d="M330 966h16l4 42z" fill="#5f9f68" stroke="#222" stroke-width="2"/>
        <path d="M346 966h12L1545 680V694L350 1008z" fill="#a1e9a1" stroke="#3b5a3b" stroke-width="2.500"/>
        <path d="M1072 738 1098 775" stroke="#222" stroke-width="3"/>
        <path d="M60 362 145 303 400 262 800 300 1545 420V560L330 830 200 600z" fill="#616b2f"/>
        <path d="M24 290 125 222 140 292 62 345 38 362z" fill="url(#slatB)" stroke="#555" stroke-width="2"/>
        <path d="M125 222 390 185 400 253 140 293z" fill="url(#slatA)"/>
        <path d="M60 346 140 293 400 253V266L146 305 72 362z" fill="#e4e6e5" stroke="#777" stroke-width="1.500"/>
        <path d="M60 346 140 293 148 304 72 362z" fill="#a7a9a8"/>
        <path d="M252 203 258 273M364 188 370 255" stroke="#666" stroke-width="7"/>
        <path d="M118 222h14l11 70h-12zM18 290h14l8 72-10-12z" fill="#5c5c5e" stroke="#333" stroke-width="1.500"/>
        <path d="M528 165 783 128V200L640 188z" fill="url(#slatA)"/>
        <path d="M572 158v25M670 143v40M732 137v45" stroke="#666" stroke-width="5"/>
        <path d="M1350 153 1412 180 1545 232V302L1395 250z" fill="url(#slatC)"/>
        <path d="M1417 180v62M1505 215 1500 288" stroke="#555" stroke-width="8"/>
        <path d="M1395 248 1490 285 1485 292 1395 268z" fill="#b9bbba" stroke="#555" stroke-width="1.500"/>
        <path d="M378 322 402 310 650 330 952 455 935 481 780 440 435 342z" fill="#6c6c6c" stroke="#222" stroke-width="2.500"/>
        <path d="M435 342 512 362 400 430 318 406z" fill="#777"/>
        <path d="M422 350 500 370M408 358 486 379M394 366 470 388M380 374 455 397M364 382 440 406M350 391 424 415M335 399 408 424" stroke="#3f423a" stroke-width="3"/>
        <path d="M148 490 272 418 305 402 400 428 855 578 720 695 290 540z" fill="#707070" stroke="#333" stroke-width="2.500"/>
        <path d="M285 538 412 461 826 598 714 695z" fill="#7c7c7c" stroke="#2e2e2e" stroke-width="2.500"/>
        <path d="M298 537 412 467 815 600 713 690z" fill="none" stroke="#444" stroke-width="1.500"/>
        <path d="M310 535 412 472 805 602 712 684z" fill="#0067b5" stroke="#123" stroke-width="2"/>
        <!-- furniture -->
        <path d="M195 457 250 428 258 444 202 474z" fill="#ddd" stroke="#666" stroke-width="2"/><path d="M200 476 262 446 268 455 215 482z" fill="#eee" stroke="#666" stroke-width="2"/>
        <path d="M196 490l30-8 12 10-34 8z" fill="#ccc" stroke="#666" stroke-width="2"/>
        <path d="M180 475 196 470V495M184 478v18M200 482 242 488M205 485 198 505M235 488 230 505" fill="none" stroke="#7a4d2c" stroke-width="4"/>
        <path d="M526 360q14-12 14 18l-16 4zM558 380q14-14 16 4l-10 14zM498 388h30l-8 8h-24zM520 400h24l-6 12h-14z" fill="#b87740" stroke="#5b371b" stroke-width="2"/>
        <path d="M510 368l20 8M500 396l-8 10M530 410v12M565 398l4 12M545 395l20 4" stroke="#8a5528" stroke-width="4"/>
        <!-- left wing -->
        <path d="M455 245 640 285V350L560 330 455 325z" fill="#5f6062"/>
        <path d="M400 232 456 245 455 326 402 316z" fill="url(#stone)" stroke="#222" stroke-width="2"/>
        <path d="M456 262h14v50h-14z" fill="#bfc3c6"/><path d="M472 250h22v55h-22z" fill="#44444c"/><path d="M498 262h30v20h-30z" fill="#2f3033" stroke="#bbb" stroke-width="2"/>
        <path d="M575 278 640 290V348L600 338 578 310z" fill="#dfe1e0" stroke="#555" stroke-width="1.500"/>
        <path d="M638 290 960 362 950 470 915 450 638 352z" fill="#d9dcda"/>
        <path d="M640 294 790 326V384L640 350z" fill="#a9727a" stroke="#444" stroke-width="2"/><path d="M646 298 680 306 672 335 646 330zM722 318 785 332V350L722 338z" fill="#c993ad"/><path d="M684 304v55M734 316v57" stroke="#444" stroke-width="4"/>
        <path d="M802 334 902 356 900 413 802 391z" fill="#6ba37c" stroke="#333" stroke-width="3"/><path d="M862 348v55" stroke="#333" stroke-width="2"/><path d="M866 352 896 358 894 404 866 398z" fill="#84a660"/>
        <path d="M915 370 952 378 950 458 913 450z" fill="#55a070" stroke="#333" stroke-width="2"/><path d="M930 376v70" stroke="#b9e0c4" stroke-width="3"/>
        <path d="M365 216 400 190 530 167 640 188 690 173 860 160 800 250 960 300 952 358 780 310z" fill="#808080"/>
        <path d="M365 217 780 310 945 353 955 345V362L940 368 780 323 370 229z" fill="#e2e4e3" stroke="#444" stroke-width="2"/>
        <path d="M575 225l15-3" stroke="#444" stroke-width="4"/>
        <path d="M390 181 480 142 525 150V180L435 218 392 210z" fill="url(#stone)" stroke="#222" stroke-width="2"/>
        <path d="M398 182 480 147 518 153 436 191z" fill="#2c2c31" stroke="#15151a" stroke-width="2"/><path d="M470 152 515 156 490 166z" fill="#66666f"/>
        <!-- umbrella -->
        <path d="M594 330v98M608 345 594 360M582 424l30 6M584 432l24-12" stroke="#2c2c2c" stroke-width="5"/>
        <path d="M475 325 542 297 612 318 604 328 545 349 488 341z" fill="#6d5749" stroke="#3a2d25" stroke-width="2"/><path d="M542 297 512 343 545 349 574 339z" fill="#86705f"/><path d="M542 297 488 341M542 297 600 329" stroke="#4a3a30" stroke-width="1.500"/>
        <!-- back volumes -->
        <path d="M1120 62 1165 55 1350 128 1348 152 1290 150 1120 190z" fill="#7f7f7f" stroke="#333" stroke-width="2.500"/>
        <path d="M1300 146 1350 130V153L1318 150z" fill="#dfe1e0" stroke="#555" stroke-width="1.500"/>
        <path d="M1120 186 1170 128 1412 165 1400 255 1541 302 1545 330 1500 480 1478 522 1275 450 1195 553 1088 527 1095 430 1070 300z" fill="#dde0df" stroke="#444" stroke-width="2"/>
        <path d="M1122 190 1176 142 1398 178 1325 278 1535 318 1513 372 1280 325 1215 405 1110 378 1140 320 1225 250 1228 220z" fill="#808080" stroke="#333" stroke-width="2"/>
        <path d="M1328 264 1400 185 1396 250 1350 268z" fill="#b3b5b4"/><path d="M1345 260 1398 205M1360 264 1396 225" stroke="#777" stroke-width="4" stroke-dasharray="9 6"/>
        <path d="M1328 264 1541 303 1532 320 1325 280z" fill="#eceeed" stroke="#555" stroke-width="1.500"/>
        <path d="M1513 372 1541 303 1545 312V345L1505 475 1480 522z" fill="#a8aaa9" stroke="#444" stroke-width="1.500"/>
        <path d="M1280 325 1513 373 1478 522 1275 450z" fill="#dde0df" stroke="#444" stroke-width="2"/>
        <path d="M1280 325 1215 405V455L1275 378z" fill="#cfd2d1" stroke="#444" stroke-width="1.500"/><path d="M1226 415 1272 350" stroke="#777" stroke-width="8" stroke-dasharray="6 8"/>
        <path d="M1495 395h14v9h-14z" fill="#888"/>
        <path d="M1500 510 1545 440V520L1490 525z" fill="#616b2f"/><path d="M1512 440h33v16l-33-6z" fill="#e8eae9"/><path d="M1535 470 1545 440V515l-12 2z" fill="#777"/>
        <path d="M1110 376 1216 405 1215 460 1196 553 1088 526 1095 430z" fill="#e0e3e2" stroke="#333" stroke-width="2"/>
        <path d="M1100 400h14v13h-14z" fill="#aaa" stroke="#555" stroke-width="1.500"/><path d="M1098 445v75" stroke="#444" stroke-width="3" stroke-dasharray="6 12"/><path d="M1205 420v90" stroke="#888" stroke-width="4" stroke-dasharray="5 12"/>
        <path d="M1215 485 1298 512 1265 550 1200 535z" fill="#6f6f6f" stroke="#444" stroke-width="1.500"/><path d="M1370 520 1400 505 1478 522 1445 545z" fill="#777"/>
        <path d="M1340 510h20l-6 60h-16z" fill="#a5a5a5" stroke="#444" stroke-width="1.500"/>
        <path d="M1275 376 1450 420 1402 518 1200 462 1215 438z" fill="#7f7f7f" stroke="#333" stroke-width="2.500"/>
        <path d="M1450 420 1402 518 1396 526 1445 430z" fill="#aaa"/>
        <path d="M1127 442 1150 443 1402 513 1396 526 1128 458z" fill="#a0a0a0" stroke="#444" stroke-width="2"/>
        <path d="M1196 553 1165 600" stroke="#222" stroke-width="3"/>
        <!-- central volume -->
        <path d="M1070 300 1140 322 1135 370 1110 378 1095 430 1070 415z" fill="#e0e3e2" stroke="#555" stroke-width="1.500"/>
        <path d="M1140 322 1228 240 1220 275 1138 370z" fill="#bdc0bf" stroke="#555" stroke-width="1.500"/>
        <path d="M1068 410 1098 416 1090 496 1062 488z" fill="#69a97e" stroke="#444" stroke-width="1.500"/>
        <path d="M800 248 962 278V337L905 325 902 302 800 276z" fill="#dfe2e1" stroke="#555" stroke-width="1.500"/>
        <path d="M742 222 862 153 1000 170 1252 213V228L1142 325 962 280z" fill="#858282" stroke="#333" stroke-width="2"/>
        <path d="M742 222 962 274 1140 314 1252 213V228L1142 325 962 284 742 232z" fill="#9b9b9b" stroke="#444" stroke-width="1.500"/>
        <path d="M782 228 812 211 932 240 904 259z" fill="#555" stroke="#333" stroke-width="2"/>
        <path d="M800 227 816 219 836 224 822 234zM830 236 846 226 866 232 852 241zM858 242 876 233 896 238 882 248zM888 248 904 241 922 244 904 255z" fill="#e8efe9"/>
        <path d="M836 106 1050 150V184L870 155 836 168z" fill="#dfe1e0"/>
        <path d="M846 112 1030 146V180L846 148z" fill="#8d7c9b" stroke="#444" stroke-width="2"/>
        <path d="M852 115l20 4v26l-20-4zM905 126l28 5v28l-28-6zM970 138l24 5v28l-24-5z" fill="#c8b4d6"/><path d="M885 122l14 2-8 24-10-2zM940 132l14 3v24l-14-3z" fill="#b77a8c"/><path d="M900 122v36M935 130v34M968 136v32M1000 142v32" stroke="#443c4c" stroke-width="3"/>
        <path d="M783 108 838 112V162L800 186 738 178V148z" fill="#cdd3da"/><path d="M740 152 800 160 832 140V162L800 186 740 180z" fill="#8d99ad"/><path d="M790 128h40v12h-40z" fill="#c08a64"/><path d="M735 135 800 108M800 112v74M740 150v32M833 112v50" fill="none" stroke="#666" stroke-width="4"/>
        <path d="M1050 152 1125 103 1122 190 1050 182z" fill="#c6c9c8" stroke="#555" stroke-width="1.500"/><path d="M1054 163 1120 118" stroke="#8fb9cc" stroke-width="12" stroke-dasharray="10 6"/>
        <path d="M758 80 885 28 1160 69V82L1058 151 758 96z" fill="#808080" stroke="#333" stroke-width="2"/>
        <path d="M758 84 1056 139 1160 69V82L1058 152 758 98z" fill="#a3a3a3" stroke="#444" stroke-width="1.500"/>
        <path d="M965 185 1076 207 1056 498 950 470z" fill="url(#stone)" stroke="#1f1f24" stroke-width="3"/>
        <path d="M1076 207 1098 195 1095 282 1073 302 1058 498z" fill="#2d2d34" stroke="#1f1f24" stroke-width="2"/>
        <path d="M965 185 985 176 1098 193 1076 207z" fill="#1f1f24"/><path d="M985 181 1085 197 1072 201 978 187z" fill="#55555c"/>
        <g fill="#444"><circle cx="940" cy="44" r="4"/><circle cx="1124" cy="73" r="4"/><circle cx="1042" cy="127" r="4"/><circle cx="845" cy="94" r="4"/><circle cx="1224" cy="217" r="4"/><circle cx="1137" cy="305" r="4"/><circle cx="1318" cy="282" r="4"/><circle cx="1242" cy="88" r="4"/><circle cx="1355" cy="488" r="3"/></g>
        <!-- front fence -->
        <path d="M332 896 1545 605V637L334 914z" fill="#e8eaea" stroke="#444" stroke-width="2.500"/>
        <path d="M325 784 1545 518V606L340 896z" fill="#626330"/>
        <path d="M325 792 1545 523M327 805 1545 534M329 819 1545 545M331 833 1545 556M333 847 1545 567M335 861 1545 578M337 875 1545 589M339 888 1545 600" stroke="#c18b5b" stroke-width="7"/>
        <path d="M340 893 1545 604" stroke="#777" stroke-width="4"/>
        <path d="M525 738 534 845M713 700 715 800M886 657 884 762M1050 620 1043 722M1202 587 1191 686M1345 555 1331 652M1480 522 1463 620" stroke="#66625c" stroke-width="8"/>
        <path d="M40 325 85 378 115 440 155 505 200 580 255 670 322 782 338 890 230 712 160 585 36 365z" fill="url(#slatD)" stroke="#4b3322" stroke-width="1.500"/>
        <path d="M36 365 160 587 232 715 336 892 332 914 215 705 150 590 28 364z" fill="#b7b9b8" stroke="#444" stroke-width="1.500"/>
        <path d="M80 378v18M115 438v18M155 502v18M200 578v20M253 668v22" stroke="#555" stroke-width="6"/>
        <path d="M312 780h16l14 112h-12z" fill="#777" stroke="#333" stroke-width="1.500"/>
        <!-- tree -->
        <path d="M392 640 396 745" stroke="#46301f" stroke-width="7"/>
        <g filter="url(#leaf)" fill="#2c3718" fill-opacity=".88"><ellipse cx="400" cy="540" rx="36" ry="40"/><ellipse cx="355" cy="580" rx="28" ry="32"/><ellipse cx="425" cy="585" rx="38" ry="34"/><ellipse cx="345" cy="645" rx="34" ry="36"/><ellipse cx="430" cy="655" rx="36" ry="30"/><ellipse cx="388" cy="620" rx="36" ry="60"/><ellipse cx="350" cy="690" rx="30" ry="18"/><ellipse cx="432" cy="700" rx="26" ry="16"/></g>
        <g filter="url(#leaf)" fill="#46542a"><circle cx="375" cy="560" r="9"/><circle cx="425" cy="570" r="9"/><circle cx="350" cy="625" r="10"/><circle cx="440" cy="640" r="9"/><circle cx="390" cy="670" r="10"/><circle cx="340" cy="680" r="8"/><circle cx="400" cy="610" r="8"/></g>
      </g>
      <g stroke-width="6"><path d="M168 1342V1250" stroke="#0808e0"/><path d="M168 1225l12 33h-24z" fill="#0505d0"/><path d="M168 1342 80 1316" stroke="#08c818"/><path d="M50 1308l38-2-12 22z" fill="#04d614"/><path d="M168 1342 222 1300" stroke="#f01010"/><path d="M241 1285l-32 8 16 18z" fill="#b00505"/></g>
    </svg>
  </section>
</main>

<footer class="status"><span>Seleccione una opción del menú.</span><span class="right"><svg viewBox="0 0 12 12" width="12" height="12"><path d="M1 1l8 9M9 1 1 10M4 1v3M1 4h3" stroke="#444" stroke-width="1.500"/><circle cx="9" cy="9" r="2.200" fill="#ccc" stroke="#444"/></svg>España - Unifamiliar aislada</span></footer>
<script src="app.js"></script>
</body>
</html>
```

FILE: styles.css
```css
* { box-sizing: border-box; }
html, body { height: 100%; }
body {
  margin: 0;
  display: flex;
  flex-direction: column;
  overflow: hidden;
  font: 10px/12px Lato, "Open Sans", sans-serif;
  color: #111;
  background: #9d9dc1;
}
button, select { font: inherit; color: inherit; border: 0; padding: 0; margin: 0; background: none; }
h1, h2 { font: inherit; margin: 0; }
svg { display: block; flex: none; }
.defs { position: absolute; width: 0; height: 0; }
.grow { flex: 1; }
.t-ic { font-family: "Liberation Sans", sans-serif; font-weight: bold; fill: #222; }
.t-10 { font-size: 10px; }
.t-9 { font-size: 9px; }
.t-6 { font-size: 6px; }
.t-5 { font-size: 5px; }
.blue { fill: #1a2fe0; }
.red { fill: #c22; }

/* title bar and tabs */
.top { display: flex; flex: none; background: #f5f5f5; }
.app { width: 39px; padding: 3px 3px 4px; border-right: 1px solid #b8b8c8; }
.app svg { background: linear-gradient(#b9d0ee, #8fb3e0); }
.bars { flex: 1; min-width: 0; }
.title { display: flex; align-items: center; height: 21px; background: #5a5a8a; color: #e6e6f0; }
.quick { display: flex; align-items: center; justify-content: space-around; width: 82px; height: 21px; background: #f5f5f5; }
.title h1 { flex: 1; text-align: center; }
.account { display: flex; align-items: center; gap: 4px; width: 148px; white-space: nowrap; }
.win { display: flex; }
.win button { display: grid; place-items: center; width: 38px; height: 21px; color: #fff; }
.tabs { display: flex; align-items: stretch; height: 20px; background: #c7c7c7; }
.tab { width: 129px; text-align: center; white-space: nowrap; border-bottom: 1px solid #b8b8b8; }
.tab.on { width: 70px; background: #f5f5f5; border-bottom: 0; }
.mini { display: grid; place-items: center; width: 21px; }
.vsep { width: 1px; margin: 1px 6px; background: #999; }

/* ribbon */
.ribbon { display: flex; flex: none; height: 76px; background: #f5f5f5; border-top: 1px solid #fafafa; }
.group { display: flex; flex-direction: column; border-right: 1px solid #c4c4c4; }
.group.first { border-left: 1px solid #c4c4c4; }
.group h2 { text-align: center; line-height: 14px; }
.tools { display: flex; flex: 1; align-items: flex-start; }
.vis .tools { padding-right: 10px; }
.tool { padding-top: 3px; white-space: nowrap; text-align: center; }
.tool svg { margin: 0 auto 3px; }
.tool:disabled, .stack button:disabled { color: #a8a8a8; }
.w30 { width: 30px; } .w32 { width: 32px; } .w33 { width: 33px; } .w34 { width: 34px; }
.w42 { width: 42px; } .w43 { width: 43px; } .w51 { width: 51px; } .w52 { width: 52px; }
.w53 { width: 53px; } .w55 { width: 55px; } .w58 { width: 58px; } .w61 { width: 60px; }
.w64 { width: 64px; } .w65 { width: 65px; } .w67 { width: 66px; } .w68 { width: 68px; }
.vsep.tall { height: 60px; margin: 0 6px 0 2px; background: #ddd; }
.stack button { display: flex; align-items: center; gap: 3px; height: 20px; white-space: nowrap; }
.s1 { width: 52px; }
.s2 { width: 112px; }

/* docked panels */
.work { display: grid; grid-template-columns: minmax(0, 1003fr) minmax(0, 514fr); gap: 7px; flex: 1; min-height: 0; padding: 6px; }
.left { display: flex; flex-direction: column; min-width: 0; min-height: 0; }
.panel { display: flex; flex-direction: column; min-height: 0; min-width: 0; }
.cap { display: flex; align-items: center; justify-content: space-between; flex: none; height: 17px; padding: 0 3px; background: #b9b9d3; border-bottom: 1px solid #cfcfe2; }
.cap button { color: #111; }
.budget { flex: 1; background: #fff; overflow: hidden; }
.scroll { display: flex; flex: 1; min-height: 0; overflow: hidden; align-items: stretch; }
.bar { width: 13px; flex: none; background: #f0f0f0; }
.bar span { display: block; width: 2px; height: 36px; margin: 13px auto 0 5px; background: #888; }
.grip { display: grid; place-items: center; flex: none; height: 6px; }

.tree { flex: 1; align-self: flex-start; width: 100%; min-width: 0; table-layout: fixed; border-collapse: separate; border-spacing: 0; }
.c-code { width: 151px; } .c-ud { width: 23px; } .c-a { width: 30px; } .c-b { width: 37px; } .c-c { width: 29px; }
.c-qty { width: 49px; } .c-price { width: 63px; } .c-total { width: 81px; } .c-icon { width: 24px; }
.tree th { height: 18px; padding: 0 4px 0 5px; font-weight: 400; text-align: left; background: #f8f9fd; border-right: 1px solid #dcdde6; white-space: nowrap; }
.tree td { height: 16px; padding: 0 4px 0 5px; border-right: 1px solid #f1f2f7; border-bottom: 1px solid #f6f6f9; white-space: nowrap; line-height: 15px; }
.tree td:first-child { padding-left: 6px; }
.tree .n { text-align: right; }
.tree td.sum { background: #f8f8f8; }
.tree td.bold { font-weight: 700; color: #333; }
.code { display: flex; align-items: center; }
.code button { margin-right: 6px; }
.code .kind { margin-right: 4px; }
.tree .ic { padding: 0; }
.ic button { display: block; margin: 0 auto; }
.unit td { color: #2a52a8; }
.root td { background: #cce8ff; border-right-color: #e4f2fd; }
.tree .root td.sum { background: #e0effa; }
.root .code { font-weight: 700; color: #444; }
.l1 { padding-left: 17px; } .l2 { padding-left: 34px; } .l3 { padding-left: 51px; } .l4 { padding-left: 68px; }

/* chart */
.charts { flex: none; }
.picker { height: 20px; padding-right: 4px; }
.combo { position: relative; width: 207px; }
.combo select { display: block; width: 100%; height: 20px; padding-left: 4px; appearance: none; background: #fff; border: 1px solid #1979ca; border-radius: 0; }
.drop { position: absolute; top: 0; right: 0; display: grid; place-items: center; width: 14px; height: 20px; background: #cce4f7; border: 1px solid #1979ca; pointer-events: none; }
.combo ul { position: absolute; z-index: 2; top: 19px; left: 0; right: 0; display: grid; grid-auto-rows: 1fr; height: 170px; margin: 0; padding: 0; list-style: none; background: #fff; border: 1px solid #1979ca; box-shadow: 2px 2px 2px rgba(0, 0, 0, .45); }
.combo li { display: flex; align-items: center; padding-left: 3px; white-space: nowrap; }
.combo li[aria-selected] { background: #cce8ff; }
.chart { display: grid; grid-template-columns: 92px minmax(0, 1fr); grid-template-rows: 232px 19px; padding: 10px 4px 0 0; background: #f8f8f8; color: #6e6e6e; font-size: 9px; }
.yaxis { display: flex; flex-direction: column; justify-content: flex-end; gap: 14px; margin-bottom: -6px; padding-right: 8px; text-align: right; }
.plot { display: grid; grid-template-columns: repeat(12, 1fr); background: #fff repeating-linear-gradient(to bottom, #dedede 0 1px, transparent 1px calc((100% - 1px) / 9)); border-left: 1px solid #ccc; border-bottom: 1px solid #c0c0c4; }
.slot { display: grid; grid-template-rows: 8fr 1fr; justify-items: center; border-right: 1px solid #e0e0e0; }
.slot div { width: 58%; background: rgba(200, 201, 207, .6); border: 1px solid #c6c6ca; }
.pos { align-self: end; }
.neg { grid-row: 2; }
.xaxis { grid-column: 2; display: grid; grid-template-columns: repeat(12, 1fr); text-align: center; }
.xaxis span { padding-top: 3px; background: linear-gradient(#ccc, #ccc) right top / 1px 3px no-repeat; }

/* 3D view */
.view { background: #fff; overflow: hidden; }
.icons { display: flex; align-items: center; flex: none; height: 21px; overflow: hidden; background: #f8f9fd; }
.icons button { display: grid; place-items: center; flex: none; width: 19px; height: 19px; }
.icons svg { width: 14px; height: 14px; }
.icons i { flex: none; width: 1px; height: 18px; margin: 0 4px; background: #c8c8cc; }
.r1 { border-bottom: 1px solid #d4d4da; }
.r2 { justify-content: flex-end; }
.r2 i { margin: 0 2px 0 3px; }
.icons .sel { background: #dcebf5; border: 1px solid #b5d5e8; }
.icons .on { background: #bcdcf0; border-color: #8fbcd8; }
.scene { flex: 1; width: 100%; min-height: 0; }

.status { display: flex; justify-content: space-between; align-items: center; flex: none; height: 15px; padding: 0 5px 0 2px; background: #f8f9fd; }
.right { display: flex; align-items: center; gap: 1px; }
```

FILE: app.js
```js
const rows = [
  [0, "Presupuesto", "", "Presupuesto", "", "", "520.814,31"],
  [1, "A", "", "Acondicionamiento del terreno", "", "", "15.962,47"],
  [2, "AD", "", "Movimiento de tierras en edificación", "", "", "5.986,47"],
  [3, "ADE", "", "Excavaciones", "", "", "5.064,02"],
  [4, "ADE002", "m³", "Excavación a cielo abierto, con medios mecánicos.", "76,94", "5,96", "458,56"],
  [4, "ADE010", "m³", "Excavación de zanjas y pozos.", "178,23", "25,84", "4.605,46"],
  [3, "ADR", "", "Rellenos y compactaciones", "", "", "922,45"],
  [4, "ADR100", "m²", "Compactación mecánica de fondo de excavación.", "221,21", "4,17", "922,45"],
  [2, "AS", "", "Red de saneamiento horizontal", "", "", "2.275,97"],
  [3, "ASA", "", "Arquetas", "", "", "315,54"],
  [4, "ASA010", "Ud", "Arqueta de obra de fábrica.", "1,00", "166,89", "166,89"],
  [4, "ASA010b", "Ud", "Arqueta de obra de fábrica.", "1,00", "148,65", "148,65"],
  [3, "ASB", "", "Acometidas", "", "", "1.940,50"],
  [4, "ASB010", "m", "Acometida general de saneamiento.", "25,00", "77,62", "1.940,50"],
  [3, "ASI", "", "Sistemas de evacuación de suelos", "", "", "19,93"],
  [4, "ASI020", "Ud", "Sumidero sifónico.", "1,00", "19,93", "19,93"],
  [2, "AN", "", "Nivelación", "", "", "3.054,91"],
  [3, "ANS", "", "Soleras", "", "", "3.054,91"],
  [4, "ANS010", "m²", "Solera de hormigón.", "221,21", "13,81", "3.054,91"],
  [2, "AM", "", "Mejoras del terreno", "", "", "4.645,12"],
  [3, "AMC", "", "Compactaciones", "", "", "4.645,12"],
  [4, "AMC010", "m³", "Relleno y compactación del terreno de apoyo de la cimentación.", "177,43", "26,18", "4.645,12"]
];
const icon = (id, w, h, cls = "") => `<svg class="${cls}" width="${w}" height="${h}"><use href="#${id}"/></svg>`;
document.getElementById("rows").innerHTML = rows.map(([level, code, unit, text, qty, price, total]) => {
  const leaf = level === 4;
  const kind = level === 0 ? "" : icon(leaf ? "i-wall" : "i-folder", 12, 10, "kind");
  return `<tr class="${leaf ? "unit" : level ? "" : "root"}">
    <td><div class="code l${level}"><button aria-label="${leaf ? "Expandir" : "Contraer"} ${code}">${icon(leaf ? "i-closed" : "i-open", 10, 10)}</button>${kind}${code}</div></td>
    <td>${unit}</td><td><div class="l${level}">${text}</div></td><td></td><td></td><td></td><td></td>
    <td class="n ${qty ? "sum" : ""}">${qty}</td><td class="n">${price ? price + " EUR" : ""}</td>
    <td class="n sum ${leaf ? "" : "bold"}">${total} EUR</td>
    <td class="ic"><button aria-label="Localizar ${code}">${icon("i-target", 14, 14)}</button></td></tr>`;
}).join("");

const series = { A: 12600, C: 75000, E: 55300, F: 20300, L: -1800, I: 3100, N: 4300, Q: 27900, R: 26400, S: 1600, U: 22600, G: 0 };
document.getElementById("plot").innerHTML = Object.values(series).map(v =>
  `<div class="slot">${v > 0 ? `<div class="pos" style="height:${v / 800}%"></div>` : v < 0 ? `<div class="neg" style="height:${-v / 100}%"></div>` : ""}</div>`).join("");
document.getElementById("xaxis").innerHTML = Object.keys(series).map(k => `<span>${k}</span>`).join("");
```
